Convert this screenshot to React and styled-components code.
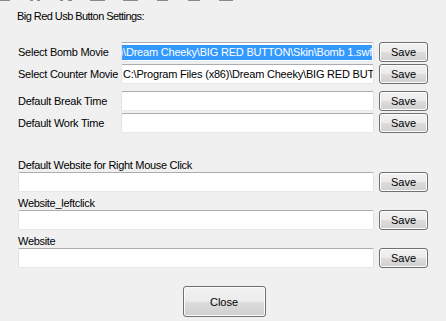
import React from 'react'
import styled, { createGlobalStyle } from 'styled-components'

const Global = createGlobalStyle`
  html, body {
    margin: 0;
    padding: 0;
    background: #f0f0f0;
  }
  body {
    font-family: "Liberation Sans", Arial, sans-serif;
    font-size: 11px;
    color: #000;
  }
`

const Window = styled.div`
  width: 446px;
  height: 321px;
  background: #f0f0f0;
  overflow: hidden;
  display: flex;
  flex-direction: column;
`

const Strip = styled.svg`
  display: block;
  flex: none;
`

const Body = styled.div`
  display: flex;
  flex-direction: column;
  padding: 8px 18px 0 18px;
`

const Title = styled.div`
  margin-left: -1px;
  height: 14px;
  line-height: 15px;
  white-space: nowrap;
  font-size: 11px;
  letter-spacing: -0.55px;
`

const FieldGrid = styled.div`
  display: grid;
  grid-template-columns: 103px 253px 54px;
  grid-auto-rows: 20px;
  row-gap: 2px;
  margin-top: ${p => p.$top}px;
`

const Label = styled.div`
  display: flex;
  align-items: center;
  white-space: nowrap;
  letter-spacing: -0.25px;
`

const TextBox = styled.div`
  box-sizing: border-box;
  height: 20px;
  width: ${p => (p.$wide ? '356px' : 'auto')};
  background: #fff;
  border: 1px solid #e2e3ea;
  border-top-color: #abadb3;
  border-bottom-color: #e3e9ef;
  border-radius: 2px;
  display: flex;
  align-items: center;
  justify-content: ${p => (p.$end ? 'flex-end' : 'flex-start')};
  overflow: hidden;
  padding: 0 1px;
  white-space: nowrap;
  letter-spacing: -0.2px;
`

const Selected = styled.span`
  background: #3399ff;
  color: #fff;
  line-height: 15px;
  flex: none;
`

const Plain = styled.span`
  line-height: 15px;
  flex: none;
`

const Button = styled.button`
  box-sizing: border-box;
  justify-self: end;
  width: ${p => p.$w || 49}px;
  height: ${p => p.$h || 20}px;
  padding: 0;
  font-family: "Liberation Sans", Arial, sans-serif;
  font-size: 11px;
  color: #000;
  border: 1px solid #707070;
  border-radius: 3px;
  background: linear-gradient(#f2f2f2 0%, #ebebeb 50%, #dddddd 50%, #cfcfcf 100%);
  box-shadow: inset 0 0 0 1px #fcfcfc;
`

const Section = styled.div`
  display: flex;
  flex-direction: column;
  gap: 4px;
  margin-top: 25px;
`

const Block = styled.div`
  display: flex;
  flex-direction: column;
`

const BlockLabel = styled.div`
  height: 14px;
  line-height: 14px;
  white-space: nowrap;
  letter-spacing: -0.3px;
`

const Row = styled.div`
  display: flex;
  gap: 5px;
`

const Footer = styled.div`
  display: flex;
  justify-content: center;
  margin-top: 18px;
  padding-left: 2px;
`

const marks = [[0, 10], [30, 3], [37, 3], [60, 3], [68, 4], [90, 15], [123, 15], [157, 11], [188, 12], [219, 14]]

const websites = ['Default Website for Right Mouse Click', 'Website_leftclick', 'Website']

export default function App() {
  return (
    <>
      <Global />
      <Window>
        <Strip width="446" height="1">
          {marks.map(([x, w]) => (
            <rect key={x} x={x} y="0" width={w} height="1" fill="#8a8a8a" />
          ))}
        </Strip>
        <Body>
          <Title>Big Red Usb Button Settings:</Title>
          <FieldGrid $top={19}>
            <Label>Select Bomb Movie</Label>
            <TextBox $end>
              <Selected>C:\Program Files (x86)\Dream Cheeky\BIG RED BUTTON\Skin\Bomb 1.swf</Selected>
            </TextBox>
            <Button>Save</Button>
            <Label>Select Counter Movie</Label>
            <TextBox>
              <Plain>C:\Program Files (x86)\Dream Cheeky\BIG RED BUTTON\Skin\Counter.swf</Plain>
            </TextBox>
            <Button>Save</Button>
          </FieldGrid>
          <FieldGrid $top={7}>
            <Label>Default Break Time</Label>
            <TextBox />
            <Button>Save</Button>
            <Label>Default Work Time</Label>
            <TextBox />
            <Button>Save</Button>
          </FieldGrid>
          <Section>
            {websites.map(name => (
              <Block key={name}>
                <BlockLabel>{name}</BlockLabel>
                <Row>
                  <TextBox $wide />
                  <Button>Save</Button>
                </Row>
              </Block>
            ))}
          </Section>
          <Footer>
            <Button $w={83} $h={31}>Close</Button>
          </Footer>
        </Body>
      </Window>
    </>
  )
}
